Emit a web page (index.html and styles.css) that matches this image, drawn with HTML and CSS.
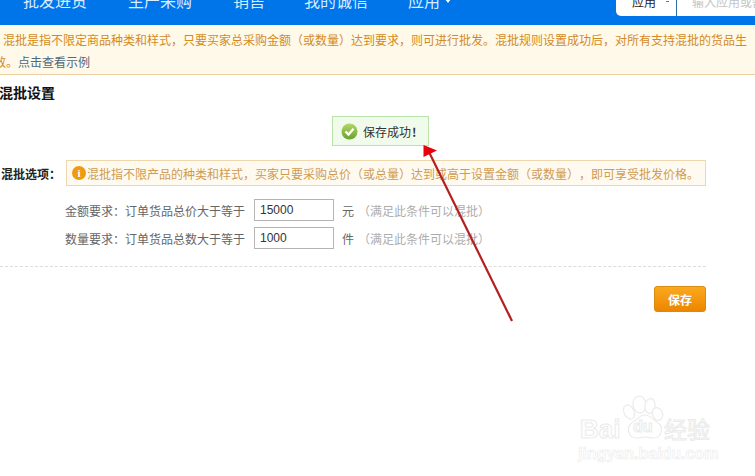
FILE: index.html
```html
<!DOCTYPE html>
<html lang="zh">
<head>
<meta charset="utf-8">
<title>混批设置</title>
<link rel="stylesheet" href="styles.css">
</head>
<body>
<div class="page">
  <header class="nav">
    <ul class="nav-list">
      <li class="nav-a">批发进货</li>
      <li class="nav-b">生产采购</li>
      <li class="nav-c">销售</li>
      <li class="nav-d">我的诚信</li>
      <li class="nav-e">应用<span class="caret"></span></li>
    </ul>
    <div class="search">
      <div class="search-type">应用<span class="search-caret"></span></div>
      <div class="search-input">输入应用或需求</div>
    </div>
  </header>
  <section class="notice">
    <p class="notice-one">混批是指不限定商品种类和样式，只要买家总采购金额（或数量）达到要求，则可进行批发。混批规则设置成功后，对所有支持混批的货品生</p>
    <p class="notice-two">效。<a class="notice-link">点击查看示例</a></p>
  </section>
  <main class="main">
    <h2 class="title">混批设置</h2>
    <div class="msg-row">
      <div class="msg">
        <svg class="msg-icon" width="17" height="17" viewBox="0 0 17 17">
          <defs><linearGradient id="g" x1="0" y1="0" x2="0" y2="1"><stop offset="0" stop-color="#b5d76a"/><stop offset="1" stop-color="#68a22c"/></linearGradient></defs>
          <circle cx="8.5" cy="8.5" r="8" fill="url(#g)"/>
          <path d="M4.5 8.5 L7.5 11.5 L12.5 5.8" fill="none" stroke="#fff" stroke-width="2.4"/>
        </svg>
        <span>保存成功<b class="msg-bang">!</b></span>
      </div>
    </div>
    <div class="option">
      <div class="option-label">混批选项：</div>
      <div class="tip"><span class="tip-icon">i</span>混批指不限产品的种类和样式，买家只要采购总价（或总量）达到或高于设置金额（或数量），即可享受批发价格。</div>
    </div>
    <div class="form-row">
      <span class="form-label">金额要求：订单货品总价大于等于</span>
      <input class="form-input" type="text" value="15000">
      <span class="form-unit">元</span>
      <span class="form-hint">（满足此条件可以混批）</span>
    </div>
    <div class="form-row">
      <span class="form-label">数量要求：订单货品总数大于等于</span>
      <input class="form-input" type="text" value="1000">
      <span class="form-unit">件</span>
      <span class="form-hint">（满足此条件可以混批）</span>
    </div>
    <div class="divider"></div>
    <div class="actions"><button class="save" type="button">保存</button></div>
  </main>

  <svg class="arrow" width="755" height="476" viewBox="0 0 755 476">
    <line x1="512" y1="321" x2="429" y2="152" stroke="#b3201f" stroke-width="2.2"/>
    <polygon points="423.5,145 437,150.5 423.5,157" fill="#e8000d"/>
  </svg>

  <div class="mark">
    <svg class="mark-paw" width="45" height="55" viewBox="0 0 45 55">
      <g fill="#fff" stroke="#ebebeb" stroke-width="1.2">
        <ellipse cx="7" cy="22" rx="5" ry="7.5" transform="rotate(-25 7 22)"/>
        <ellipse cx="17.5" cy="14.5" rx="6.5" ry="8.5" transform="rotate(-6 17.5 14.5)"/>
        <ellipse cx="28" cy="16" rx="5" ry="7.5" transform="rotate(10 28 16)"/>
        <ellipse cx="35.5" cy="24" rx="5" ry="6.5" transform="rotate(-25 35.5 24)"/>
        <path d="M23 25 C29 25 31 30 35 32 C42 36 41 48 31 48 C27 48 26 47 23 47 C20 47 19 48 15 48 C5 48 4 36 11 32 C15 30 17 25 23 25 Z"/>
      </g>
    </svg>
    <span class="mark-bai">Bai</span>
    <span class="mark-du">du</span>
    <span class="mark-cn">经验</span>
    <span class="mark-url">jingyan.baidu.com</span>
  </div>
</div>
</body>
</html>
```

FILE: styles.css
```css
* { box-sizing: border-box; }
html, body { margin: 0; padding: 0; background: #fff; }
body { font-family: "Noto Sans CJK SC", "Liberation Sans", sans-serif; font-size: 12px; text-spacing-trim: space-all; }
p, h2, ul { margin: 0; padding: 0; }

.page { position: relative; width: 755px; height: 476px; overflow: hidden; background: #fff; }

.nav { display: flex; height: 25px; background: #0075ea; overflow: hidden; }
.nav-list { display: flex; flex: none; list-style: none; width: 616px; margin-top: -12px; font-size: 16px; line-height: 24px; color: #d8ecff; white-space: nowrap; }
.nav-a { margin-left: 23px; }
.nav-b { margin-left: 41px; }
.nav-c { margin-left: 41px; }
.nav-d { margin-left: 39px; }
.nav-e { margin-left: 40px; }
.caret { display: inline-block; margin-left: 5px; border-style: solid; border-width: 4px 3.5px 0; border-color: #fff transparent transparent; vertical-align: 4px; }

.search { display: flex; flex: none; width: 139px; height: 16px; background: #fff; border-bottom-left-radius: 5px; overflow: hidden; }
.search-type { display: flex; flex: none; width: 60px; margin-top: -7px; padding-left: 16px; font-size: 12px; line-height: 18px; color: #222; white-space: nowrap; }
.search-caret { flex: none; margin: 8px 0 0 10px; width: 3px; height: 1px; background: #777; }
.search-input { flex: none; width: 79px; margin-top: -7px; padding-left: 15px; border-left: 1px solid #2f6fa8; line-height: 18px; color: #c4c4c4; white-space: nowrap; }

.notice { height: 50px; padding: 4px 0 0 3px; background: #fff9ea; border-bottom: 1px solid #ecd0a4; color: #d48a1e; line-height: 22px; white-space: nowrap; }
.notice-two { margin-left: -9px; }
.notice-link { color: #4d6a80; }

.main { display: flex; flex-direction: column; }
.title { margin: 8px 0 0 -1px; font-size: 14px; line-height: 18px; font-weight: 700; color: #111; }
.msg-row { display: flex; margin: 15px 0 0 332px; }
.msg { display: flex; align-items: center; width: 97px; height: 30px; padding-left: 8px; background: #f0fbec; border: 1px solid #b9e3aa; color: #333; }
.msg-icon { margin-right: 5px; flex: none; }
.msg-bang { margin-left: 1px; }

.option { display: flex; align-items: center; margin-top: 14px; }
.option-label { width: 66px; padding-left: 1px; font-weight: 700; color: #222; white-space: nowrap; }
.tip { display: flex; align-items: center; width: 640px; height: 26px; padding-left: 5px; background: #fffaf0; border: 1px solid #f0d6ab; color: #cf9a52; white-space: nowrap; }
.tip-icon { display: flex; align-items: center; justify-content: center; width: 14px; height: 14px; margin-right: 1px; border-radius: 50%; background: #ef9b12; color: #fff; font: 700 11px/14px "Liberation Serif", serif; }

.form-row { display: flex; align-items: center; height: 22px; margin: 6px 0 0 65px; color: #666; white-space: nowrap; }
.option + .form-row { margin-top: 13px; }
.form-label { width: 189px; }
.form-input { width: 80px; height: 22px; padding: 0 0 0 5px; border: 1px solid #b4b4b4; border-radius: 0; outline: none; font: 12px "Liberation Sans", sans-serif; color: #333; background: #fff; }
.form-unit { margin-left: 8px; width: 16px; }
.form-hint { color: #adadad; }

.divider { width: 706px; height: 0; margin-top: 17px; border-top: 1px dashed #dcdcdc; }
.actions { display: flex; justify-content: flex-end; width: 706px; margin-top: 19px; }
.save { width: 52px; height: 26px; padding: 0; background: linear-gradient(#fba91e, #ec8600); border: 1px solid #d98a10; border-radius: 3px; color: #fff; font: 700 12px "Noto Sans CJK SC", sans-serif; }

.arrow { position: absolute; left: 0; top: 0; pointer-events: none; }

.mark { position: absolute; left: 575px; top: 390px; width: 145px; height: 75px; }
.mark-paw { position: absolute; left: 47px; top: 0; }
.mark-bai, .mark-du, .mark-cn, .mark-url { position: absolute; color: #fff; -webkit-text-stroke: 1px #ebebeb; white-space: nowrap; }
.mark-bai { left: 5px; top: 24px; font: 700 26px/30px "Liberation Sans", sans-serif; }
.mark-du { left: 58px; top: 27px; font: 700 16px/20px "Liberation Sans", sans-serif; }
.mark-cn { left: 89px; top: 25px; font-size: 23px; line-height: 26px; }
.mark-url { left: 3px; top: 55px; font: 700 16px/18px "Liberation Sans", sans-serif; -webkit-text-stroke-width: 0.6px; }
```
